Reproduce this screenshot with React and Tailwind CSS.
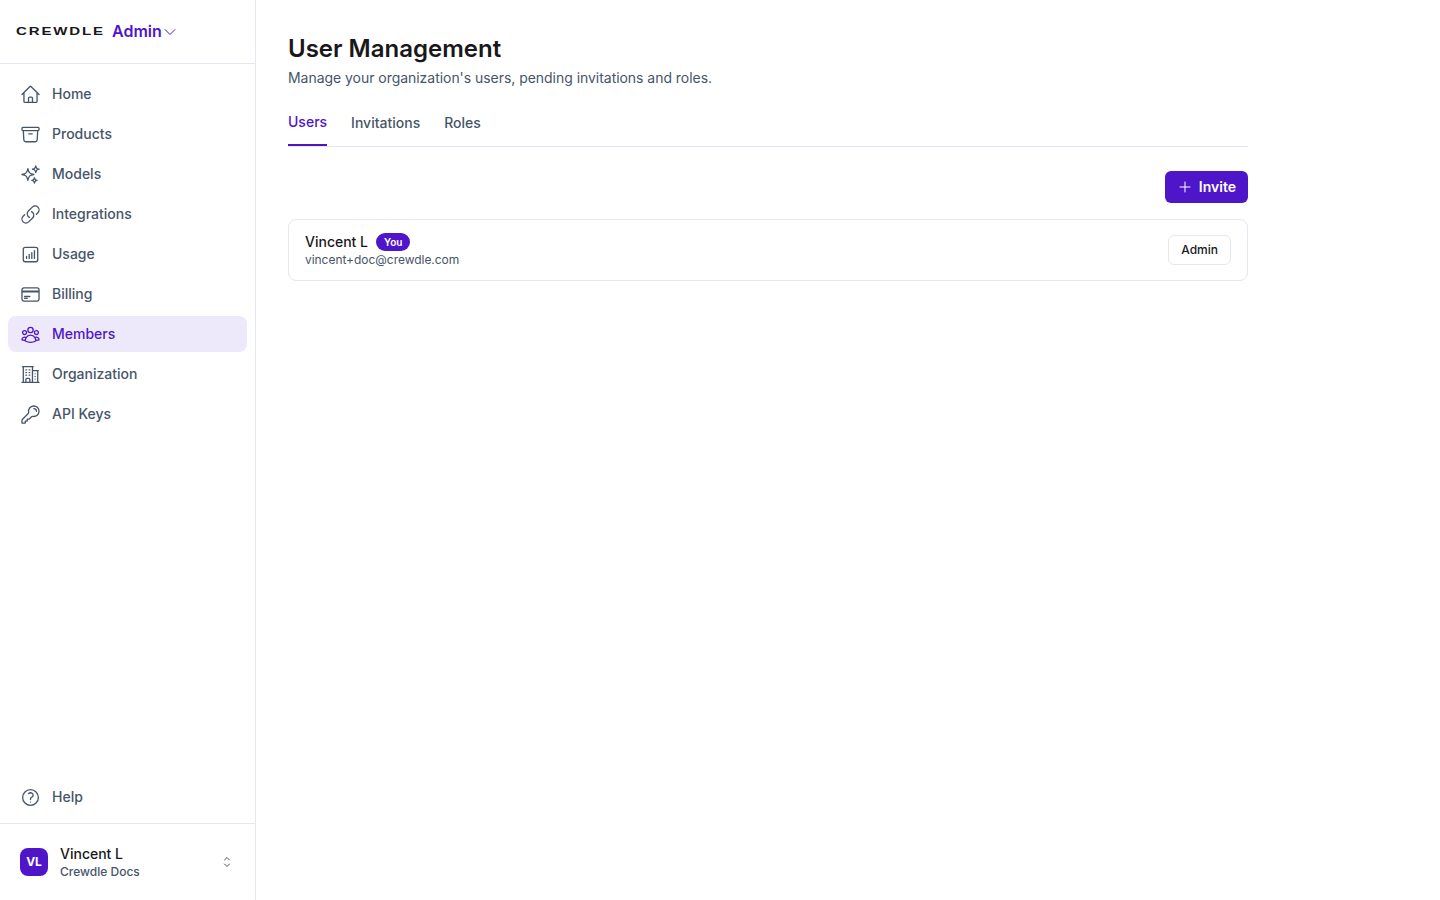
import React from 'react'
import {
  HiOutlineHome,
  HiOutlineArchiveBox,
  HiOutlineSparkles,
  HiOutlineLink,
  HiOutlineChartBarSquare,
  HiOutlineCreditCard,
  HiOutlineUserGroup,
  HiOutlineBuildingOffice2,
  HiOutlineKey,
  HiOutlineQuestionMarkCircle,
  HiOutlineChevronDown,
  HiOutlineChevronUpDown,
  HiOutlinePlus,
} from 'react-icons/hi2'

const navItems = [
  { label: 'Home', icon: HiOutlineHome },
  { label: 'Products', icon: HiOutlineArchiveBox },
  { label: 'Models', icon: HiOutlineSparkles },
  { label: 'Integrations', icon: HiOutlineLink },
  { label: 'Usage', icon: HiOutlineChartBarSquare },
  { label: 'Billing', icon: HiOutlineCreditCard },
  { label: 'Members', icon: HiOutlineUserGroup, active: true },
  { label: 'Organization', icon: HiOutlineBuildingOffice2 },
  { label: 'API Keys', icon: HiOutlineKey },
]

const NavItem = ({ item }) => {
  const Icon = item.icon
  return (
    <a
      className={`flex h-9 items-center gap-[11.5px] rounded-lg px-[11.5px] text-sm font-medium ${
        item.active ? 'bg-[#ede9fa] text-[#4f16c9]' : 'text-[#475569]'
      }`}
    >
      <Icon className="h-[21px] w-[21px] shrink-0" />
      {item.label}
    </a>
  )
}

const App = () => {
  return (
    <div className="flex h-[900px] bg-white font-['Inter',sans-serif] text-[#18181b]">
      <aside className="flex w-[256px] shrink-0 flex-col border-r border-[#e4e7f0]">
        <div className="flex h-16 shrink-0 items-center border-b border-[#e4e7f0] pl-4">
          <span className="w-[89px] origin-left scale-x-[1.5] whitespace-nowrap font-['Liberation_Sans',sans-serif] text-[10px] font-bold leading-none tracking-[1.25px] text-[#18181b]">
            CREWDLE
          </span>
          <span className="-mt-[2px] ml-[7px] text-base font-semibold text-[#4f16c9]">Admin</span>
          <HiOutlineChevronDown className="h-4 w-4 text-[#4f16c9]" />
        </div>

        <nav className="flex flex-1 flex-col gap-1 px-2 pt-3">
          {navItems.map((item) => (
            <NavItem key={item.label} item={item} />
          ))}
        </nav>

        <div className="px-2 pb-2">
          <NavItem item={{ label: 'Help', icon: HiOutlineQuestionMarkCircle }} />
        </div>

        <div className="flex h-[77px] shrink-0 items-center border-t border-[#e4e7f0] px-5">
          <div className="flex h-7 w-7 items-center justify-center rounded-lg bg-[#4f16c9] text-xs font-bold text-white">
            VL
          </div>
          <div className="ml-3 flex-1">
            <div className="text-sm font-medium leading-5">Vincent L</div>
            <div className="text-xs font-medium leading-4 text-[#475569]">Crewdle Docs</div>
          </div>
          <HiOutlineChevronUpDown className="h-4 w-4 text-[#475569]" />
        </div>
      </aside>

      <main className="flex-1 pl-8 pt-[33px]">
        <div className="w-[960px]">
          <h1 className="text-2xl font-semibold leading-8">User Management</h1>
          <p className="mt-[3px] text-sm leading-5 tracking-[-0.04px] text-[#475569]">
            Manage your organization's users, pending invitations and roles.
          </p>

          <div className="mt-[11px] flex h-[48px] gap-6 border-b border-[#e4e7f0] text-sm font-medium text-[#475569]">
            <div className="border-b-2 border-[#4f16c9] pt-[13px] leading-5 text-[#4f16c9]">Users</div>
            <div className="pt-[14px] leading-5">Invitations</div>
            <div className="pt-[14px] leading-5">Roles</div>
          </div>

          <div className="mt-6 flex justify-end">
            <button className="flex h-8 items-center gap-[6px] rounded-md bg-[#4f16c9] px-3 text-sm font-semibold text-white">
              <HiOutlinePlus className="h-4 w-4" />
              Invite
            </button>
          </div>

          <div className="mt-4 flex h-[62px] items-center justify-between rounded-lg border border-[#e4e7f0] px-4">
            <div>
              <div className="flex items-center gap-2">
                <span className="text-sm font-medium leading-5">Vincent L</span>
                <span className="flex h-[18px] items-center rounded-full bg-[#4f16c9] px-2 text-[10px] font-semibold text-white">
                  You
                </span>
              </div>
              <div className="text-xs leading-4 tracking-[-0.04px] text-[#475569]">vincent+doc@crewdle.com</div>
            </div>
            <div className="flex h-[30px] items-center rounded-md border border-[#e4e7f0] px-3 text-xs font-medium">
              Admin
            </div>
          </div>
        </div>
      </main>
    </div>
  )
}

export default App
